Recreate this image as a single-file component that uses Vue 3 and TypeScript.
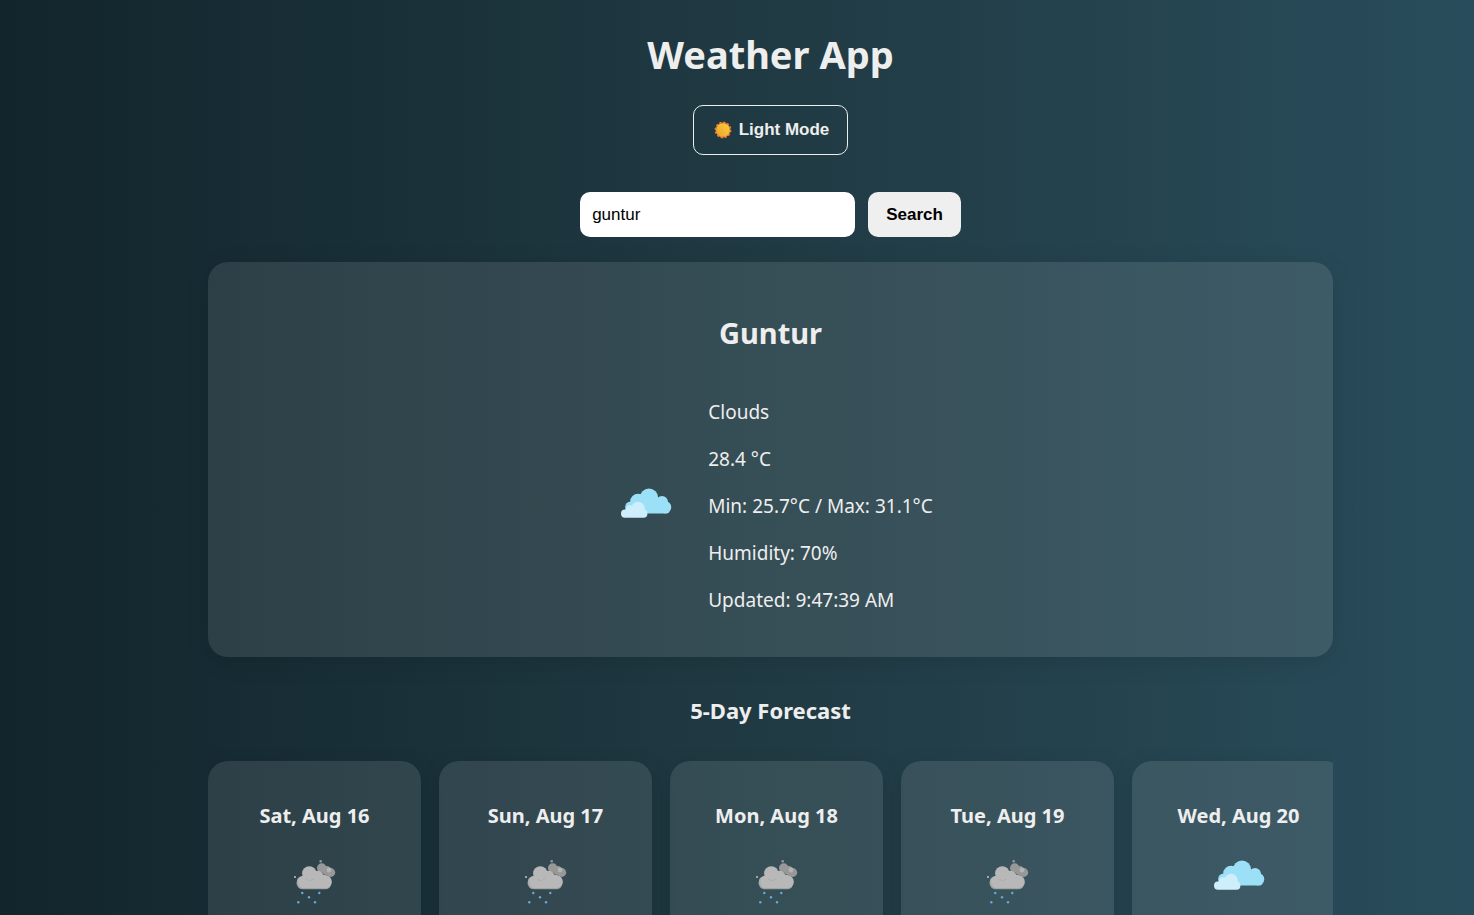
<script setup lang="ts">
import { ref } from 'vue'

type Icon = 'clouds' | 'rain'

interface ForecastDay {
  label: string
  icon: Icon
}

const city = ref('guntur')

const details: string[] = [
  'Clouds',
  '28.4 °C',
  'Min: 25.7°C / Max: 31.1°C',
  'Humidity: 70%',
  'Updated: 9:47:39 AM',
]

const forecast: ForecastDay[] = [
  { label: 'Sat, Aug 16', icon: 'rain' },
  { label: 'Sun, Aug 17', icon: 'rain' },
  { label: 'Mon, Aug 18', icon: 'rain' },
  { label: 'Tue, Aug 19', icon: 'rain' },
  { label: 'Wed, Aug 20', icon: 'clouds' },
]
</script>

<template>
  <div class="page">
    <svg class="defs" aria-hidden="true">
      <symbol id="icon-clouds" viewBox="0 0 75 75">
        <g fill="#9ce0f7">
          <circle cx="41" cy="28.8" r="9.2" />
          <circle cx="30" cy="32.5" r="7.8" />
          <circle cx="54" cy="33" r="6" />
          <circle cx="57" cy="38.2" r="6.2" />
          <circle cx="22" cy="37.5" r="4.7" />
          <rect x="17.5" y="36" width="44" height="8.4" rx="3" />
          <rect x="26" y="30" width="29" height="14" />
        </g>
        <g fill="#cdeefa">
          <circle cx="30" cy="39.5" r="6.8" />
          <circle cx="22" cy="40.5" r="4.3" />
          <rect x="13" y="40.5" width="26.4" height="8.3" rx="4" />
          <rect x="28" y="40" width="9" height="5" />
        </g>
      </symbol>
      <symbol id="icon-rain" viewBox="0 0 75 75">
        <g fill="#989898">
          <circle cx="44.7" cy="27" r="4.7" />
          <circle cx="49.5" cy="29.5" r="4.6" />
          <circle cx="53.8" cy="31.5" r="4.4" />
          <circle cx="43.7" cy="20.3" r="1.3" />
        </g>
        <circle cx="52" cy="29" r="2.4" fill="#b4b4b4" />
        <circle cx="18" cy="36" r="1" fill="#c4c4c4" />
        <rect x="19.5" y="35.5" width="35" height="12.8" rx="6.3" fill="#9f9f9f" />
        <g fill="#b8b8b8">
          <circle cx="32.3" cy="32.4" r="7.2" />
          <circle cx="40.5" cy="36.3" r="6.5" />
          <circle cx="48.2" cy="40.6" r="6.6" />
          <circle cx="26.4" cy="41" r="6.2" />
          <rect x="26" y="34" width="22" height="13.2" />
        </g>
        <path d="M29 38.5q4 2.5 8-.6" fill="none" stroke="#a9a9a9" stroke-width=".8" />
        <path d="M21.5 37q-2 4 1 8" fill="none" stroke="#a9a9a9" stroke-width=".8" />
        <g fill="#66abdc">
          <circle cx="25.3" cy="52" r="1.2" />
          <circle cx="42.3" cy="52" r="1.2" />
          <circle cx="32" cy="56.3" r="1.2" />
          <circle cx="21.3" cy="61.3" r="1.2" />
          <circle cx="38" cy="61.3" r="1.2" />
        </g>
      </symbol>
    </svg>

    <main class="app">
      <h1 class="title">Weather App</h1>

      <button class="mode" type="button">
        <svg class="sun" viewBox="0 0 18 18" aria-hidden="true">
          <defs>
            <linearGradient id="sun-fill" x1="1" y1="0" x2="0" y2="1">
              <stop offset="0" stop-color="#ffd23c" />
              <stop offset="1" stop-color="#e5a02f" />
            </linearGradient>
          </defs>
          <circle cx="9" cy="9" r="7.4" fill="#ef7f2c" />
          <circle
            cx="9" cy="9" r="7.4" fill="none" stroke="#ef7f2c" stroke-width="2"
            stroke-dasharray="2.2 1.675"
          />
          <circle cx="9" cy="9" r="6.6" fill="url(#sun-fill)" />
        </svg>
        <span>Light Mode</span>
      </button>

      <form class="search" @submit.prevent>
        <input v-model="city" class="field" type="text" aria-label="City" />
        <button class="submit" type="submit">Search</button>
      </form>

      <section class="card current">
        <h2 class="city">Guntur</h2>
        <div class="now">
          <svg class="icon" role="img" aria-label="Clouds"><use href="#icon-clouds" /></svg>
          <div class="details">
            <p v-for="line in details" :key="line" class="line">{{ line }}</p>
          </div>
        </div>
      </section>

      <h3 class="heading">5-Day Forecast</h3>

      <section class="forecast">
        <article v-for="day in forecast" :key="day.label" class="card day">
          <h4 class="date">{{ day.label }}</h4>
          <svg class="icon" role="img" :aria-label="day.icon">
            <use :href="`#icon-${day.icon}`" />
          </svg>
        </article>
      </section>
    </main>
  </div>
</template>

<style>
body {
  margin: 0;
}
</style>

<style scoped>
.page {
  box-sizing: border-box;
  min-height: 100vh;
  padding: 24px 0 0 67px;
  background: linear-gradient(to right, #0f2027 -12%, #203a43 52%, #2c5364 117%);
  color: #eee;
  font-family: "Segoe UI", "Noto Sans", "Open Sans", sans-serif;
}

.defs {
  position: absolute;
  width: 0;
  height: 0;
}

.app {
  display: flex;
  flex-direction: column;
  align-items: center;
  max-width: 1125px;
  margin: 0 auto;
}

.title {
  margin: 0 0 21px;
  font-size: 38px;
  line-height: 60px;
  font-weight: 700;
}

.mode,
.submit,
.field {
  box-sizing: border-box;
  border: 0;
  border-radius: 10px;
  font-family: Arial, "Liberation Sans", sans-serif;
  font-size: 17px;
}

.mode,
.submit {
  font-weight: 700;
  cursor: pointer;
}

.mode {
  display: flex;
  align-items: center;
  gap: 7px;
  height: 50px;
  padding: 0 18px 0 20px;
  border: 1px solid #eee;
  background: transparent;
  color: #eee;
}

.sun {
  width: 18px;
  height: 18px;
}

.search {
  display: flex;
  gap: 13px;
  margin: 37px 0 25px;
}

.field {
  width: 275px;
  height: 45px;
  padding: 0 12px;
  background: #fff;
  color: #000;
}

.submit {
  height: 45px;
  padding: 0 18px;
  background: #efefef;
  color: #000;
}

.card {
  box-sizing: border-box;
  border-radius: 20px;
  background: rgba(255, 255, 255, 0.1);
  box-shadow: 0 5px 25px rgba(0, 0, 0, 0.1);
}

.current {
  width: 100%;
  padding: 25px 25px 23px;
}

.city {
  margin: 26px 0;
  font-size: 29px;
  line-height: 40px;
  text-align: center;
}

.now {
  display: flex;
  align-items: center;
  justify-content: center;
  gap: 25px;
}

.icon {
  display: block;
  flex: none;
  width: 75px;
  height: 75px;
}

.details {
  display: flex;
  flex-direction: column;
  gap: 20px;
  padding: 20px 0;
}

.line {
  margin: 0;
  font-size: 19px;
  line-height: 27px;
}

.heading {
  margin: 37px 0 23px;
  font-size: 22px;
  line-height: 32px;
}

.forecast {
  display: flex;
  gap: 18px;
  box-sizing: border-box;
  width: 100%;
  padding: 12px 0;
  overflow-x: auto;
}

.day {
  display: flex;
  flex: none;
  flex-direction: column;
  align-items: center;
  width: 213px;
  padding: 41px 12px;
}

.date {
  margin: 0 0 12px;
  font-size: 20px;
  line-height: 27px;
}
</style>
